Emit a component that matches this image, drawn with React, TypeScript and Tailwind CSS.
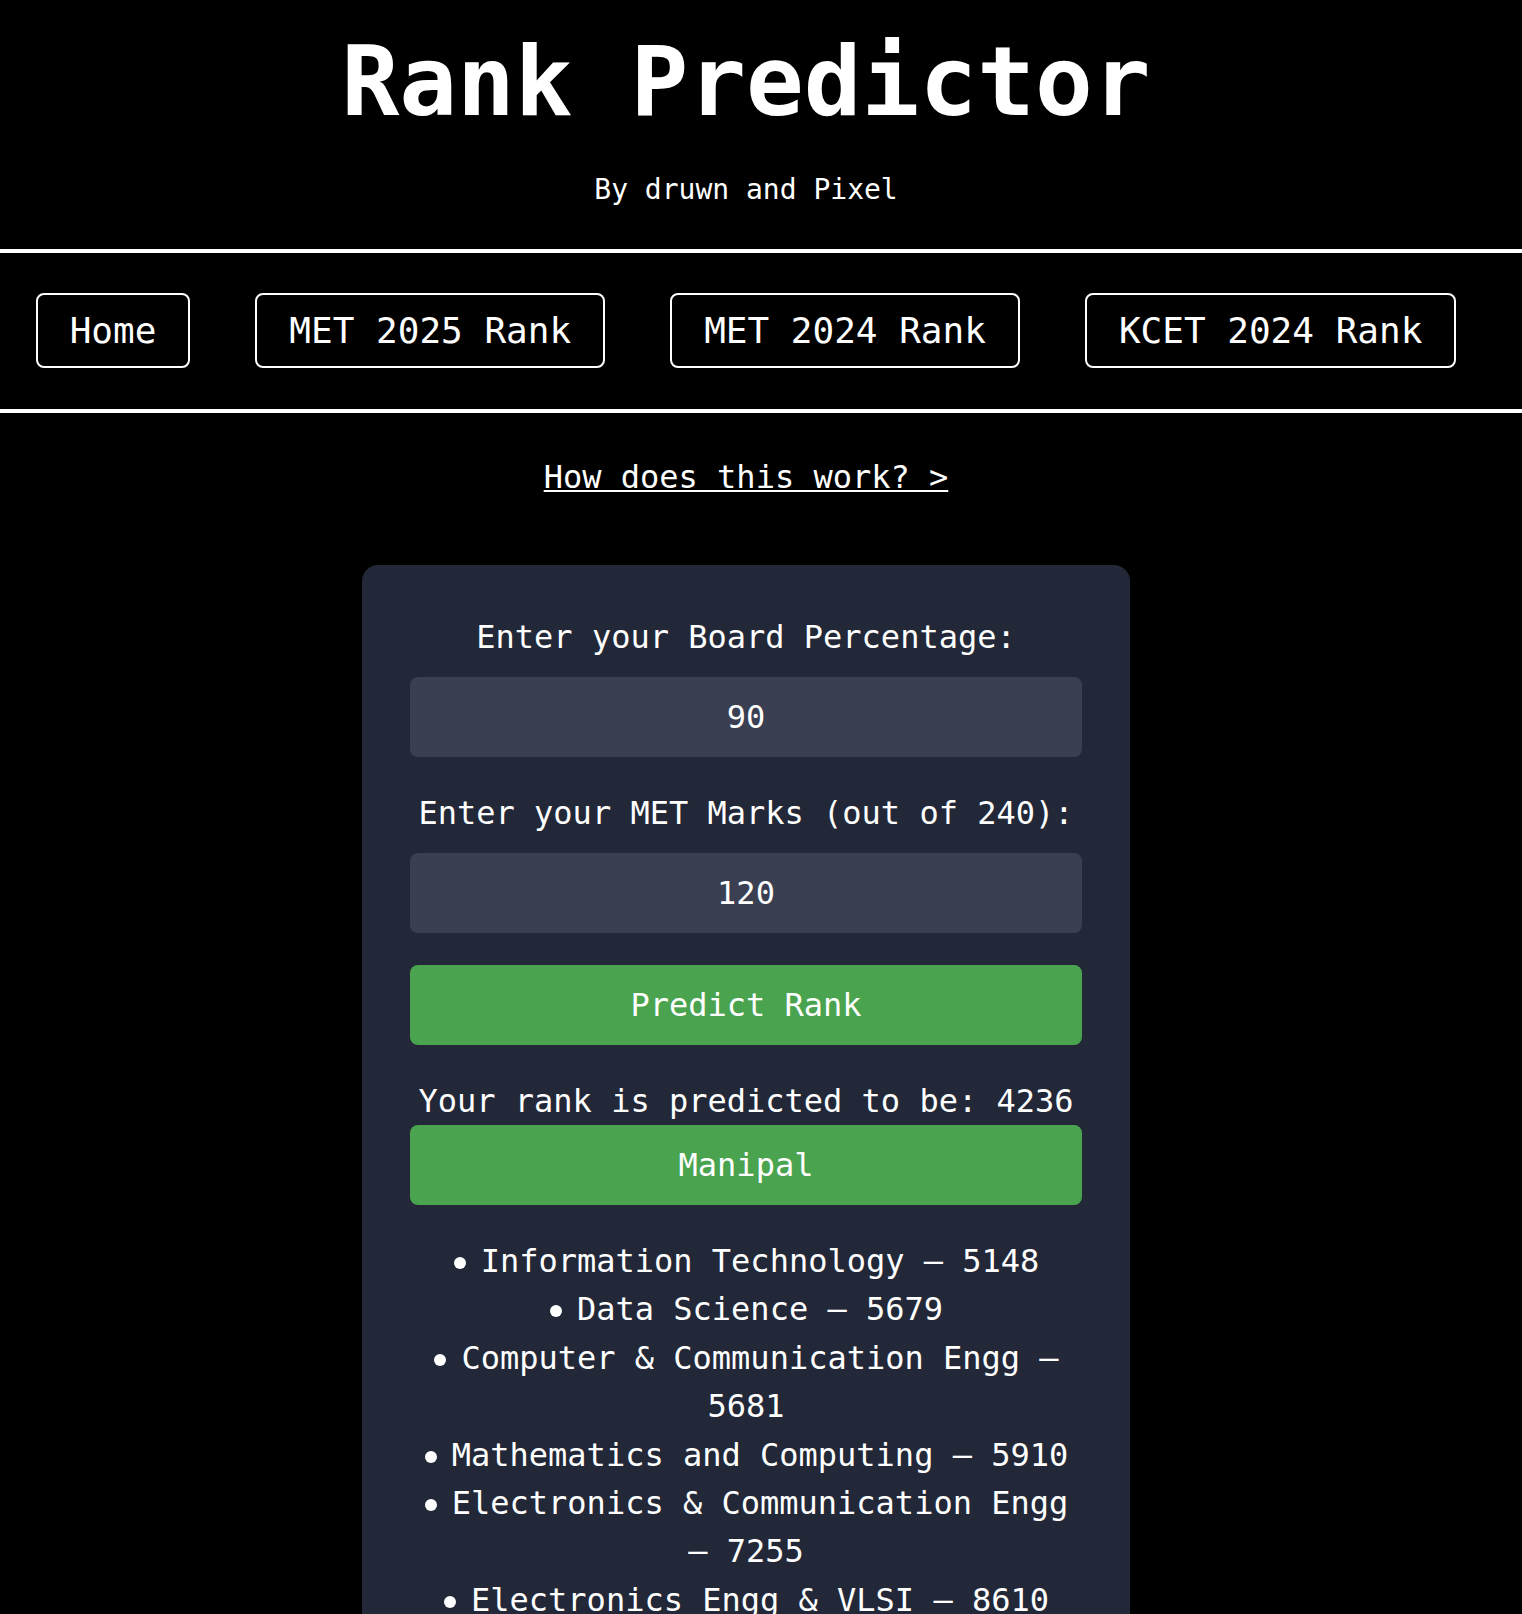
import { useState } from "react";

const branches = [
  { name: "Information Technology", rank: 5148 },
  { name: "Data Science", rank: 5679 },
  { name: "Computer & Communication Engg", rank: 5681 },
  { name: "Mathematics and Computing", rank: 5910 },
  { name: "Electronics & Communication Engg", rank: 7255 },
  { name: "Electronics Engg & VLSI", rank: 8610 },
  { name: "Mechanical Engineering", rank: 9734 },
  { name: "Civil Engineering", rank: 11210 },
];

const navLinks = ["Home", "MET 2025 Rank", "MET 2024 Rank", "KCET 2024 Rank"];

const App: React.FC = () => {
  const [percentage, setPercentage] = useState("90");
  const [marks, setMarks] = useState("120");

  return (
    <div className="min-h-screen bg-black text-white font-['DejaVu_Sans_Mono','Liberation_Mono',monospace] pb-[96px]">
      <header className="w-[1492px] pt-[26px] text-center">
        <h1 className="text-[96px] leading-[112px] font-bold">Rank Predictor</h1>
        <p className="mt-[35px] text-[28px] leading-[33px]">By druwn and Pixel</p>
      </header>

      <nav className="mt-[43px] border-y-4 border-white pt-[40px] pb-[41px]">
        <div className="w-[1492px] flex justify-center gap-[65px]">
          {navLinks.map((label) => (
            <a
              key={label}
              href="#"
              className="h-[75px] px-[32px] flex items-center border-2 border-white rounded-[8px] text-[36px] leading-[42px] whitespace-nowrap"
            >
              {label}
            </a>
          ))}
        </div>
      </nav>

      <div className="w-[1492px] mt-[40px] text-center text-[32px] leading-[48px]">
        <a href="#" className="underline decoration-2 underline-offset-2">
          How does this work? &gt;
        </a>
      </div>

      <div className="w-[1492px] mt-[64px] flex justify-center">
        <div className="w-[768px] rounded-[16px] bg-[#222838] p-[48px] text-center text-[32px] leading-[48px]">
          <label className="block">Enter your Board Percentage:</label>
          <input
            value={percentage}
            onChange={(e) => setPercentage(e.target.value)}
            className="mt-[16px] block w-full h-[80px] rounded-[8px] bg-[#3a4052] text-center text-white outline-none"
          />
          <label className="block mt-[32px]">Enter your MET Marks (out of 240):</label>
          <input
            value={marks}
            onChange={(e) => setMarks(e.target.value)}
            className="mt-[16px] block w-full h-[80px] rounded-[8px] bg-[#3a4052] text-center text-white outline-none"
          />
          <button className="mt-[32px] block w-full h-[80px] rounded-[8px] bg-[#4aa34f] text-white">
            Predict Rank
          </button>

          <p className="mt-[32px]">Your rank is predicted to be: 4236</p>
          <div className="h-[80px] flex items-center justify-center rounded-[8px] bg-[#4aa34f]">
            Manipal
          </div>

          <ul className="mt-[32px] leading-[48.4px]">
            {branches.map((b) => (
              <li key={b.name}>
                <span className="inline-block w-[12px] h-[12px] ml-[1px] mr-[15px] mb-[3px] rounded-full bg-white" />
                {b.name} — {b.rank}
              </li>
            ))}
          </ul>
        </div>
      </div>
    </div>
  );
};

export default App;
